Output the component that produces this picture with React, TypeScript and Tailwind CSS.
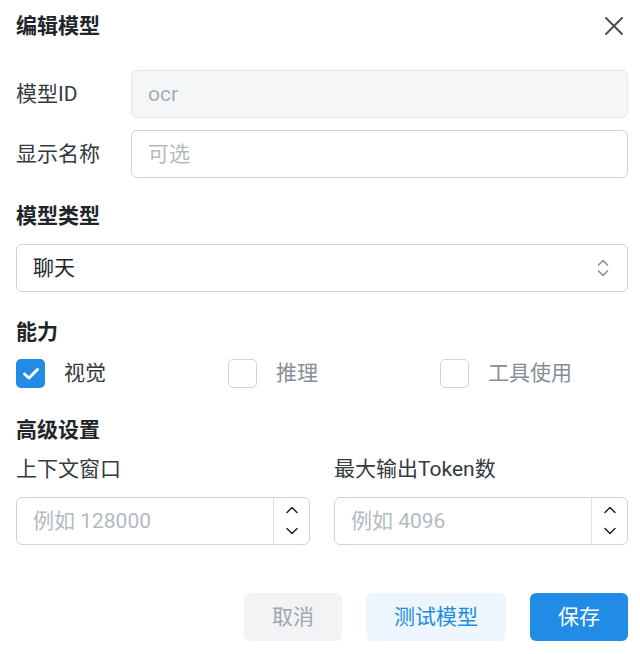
import React from "react";

const font = { fontFamily: "Roboto, 'Noto Sans CJK SC', sans-serif" };

function Chevron({ dir, className }: { dir: "up" | "down"; className?: string }) {
  return (
    <svg width="14" height="8" viewBox="0 0 14 8" className={className} fill="none" stroke="currentColor" strokeWidth="1.5" strokeLinecap="round" strokeLinejoin="round">
      {dir === "up" ? <path d="M2 6.5 L7 1.5 L12 6.5" /> : <path d="M2 1.5 L7 6.5 L12 1.5" />}
    </svg>
  );
}

function NumberInput({ placeholder }: { placeholder: string }) {
  return (
    <div className="flex h-[48px] rounded-[6px] border border-[#ced4da] bg-white">
      <div className="flex flex-1 items-center pl-4 pt-[2px] text-[21px] text-[#b4bac1]">{placeholder}</div>
      <div className="flex w-[36px] flex-col items-center justify-center gap-[13px] border-l border-[#dee2e6] text-[#212529]">
        <Chevron dir="up" />
        <Chevron dir="down" />
      </div>
    </div>
  );
}

function Check({ checked, label }: { checked?: boolean; label: string }) {
  return (
    <div className="flex items-center gap-[19px]">
      {checked ? (
        <div className="flex h-[29px] w-[29px] items-center justify-center rounded-[5px] bg-[#228be6]">
          <svg width="18" height="14" viewBox="0 0 18 14" fill="none" stroke="white" strokeWidth="3" strokeLinecap="round" strokeLinejoin="round">
            <path d="M2.5 7 L7 11 L15.5 2.5" />
          </svg>
        </div>
      ) : (
        <div className="h-[29px] w-[29px] rounded-[5px] border border-[#ced4da] bg-white" />
      )}
      <span className={`text-[21px] ${checked ? "text-[#343a40]" : "text-[#868e96]"}`}>{label}</span>
    </div>
  );
}

export default function App() {
  return (
    <div className="w-[640px] h-[654px] bg-white pl-4 pr-3 pt-3" style={font}>
      <div className="flex h-[28px] items-center justify-between">
        <h1 className="text-[21px] font-bold leading-[28px] text-[#212529]">编辑模型</h1>
        <svg width="22" height="22" viewBox="0 0 22 22" fill="none" stroke="#495057" strokeWidth="2" strokeLinecap="round" className="mr-[3px]">
          <path d="M3 3 L19 19 M19 3 L3 19" />
        </svg>
      </div>

      <div className="mt-[30px] flex flex-col gap-3">
        <div className="flex items-center">
          <label className="w-[115px] pt-[2px] text-[21px] text-[#343a40]">模型ID</label>
          <div className="flex h-[48px] flex-1 items-center rounded-[6px] border border-[#e3e6ea] bg-[#f5f6f8] pl-4 pt-[2px] text-[21px] text-[#a6adb5]">ocr</div>
        </div>
        <div className="flex items-center">
          <label className="w-[115px] pt-[2px] text-[21px] text-[#343a40]">显示名称</label>
          <div className="flex h-[48px] flex-1 items-center rounded-[6px] border border-[#ced4da] bg-white pl-4 pt-[2px] text-[21px] text-[#b4bac1]">可选</div>
        </div>
      </div>

      <h2 className="mt-[24px] text-[21px] font-bold leading-[28px] text-[#212529]">模型类型</h2>
      <div className="mt-[14px] flex h-[48px] items-center justify-between rounded-[6px] border border-[#ced4da] bg-white pl-4 pr-[18px]">
        <span className="pt-[2px] text-[21px] text-[#212529]">聊天</span>
        <div className="flex flex-col items-center gap-[4px] text-[#868e96]">
          <svg width="12" height="7" viewBox="0 0 12 7" fill="none" stroke="currentColor" strokeWidth="1.5" strokeLinecap="round" strokeLinejoin="round"><path d="M1.5 6 L6 1.5 L10.5 6" /></svg>
          <svg width="12" height="7" viewBox="0 0 12 7" fill="none" stroke="currentColor" strokeWidth="1.5" strokeLinecap="round" strokeLinejoin="round"><path d="M1.5 1 L6 5.5 L10.5 1" /></svg>
        </div>
      </div>

      <h2 className="mt-[26px] text-[21px] font-bold leading-[28px] text-[#212529]">能力</h2>
      <div className="mt-[12px] grid grid-cols-[212px_212px_1fr]">
        <Check checked label="视觉" />
        <Check label="推理" />
        <Check label="工具使用" />
      </div>

      <h2 className="mt-[26px] text-[21px] font-bold leading-[28px] text-[#212529]">高级设置</h2>
      <div className="mt-[11px] grid grid-cols-2 gap-x-6">
        <div>
          <div className="text-[21px] leading-[28px] text-[#343a40]">上下文窗口</div>
          <div className="mt-[14px]"><NumberInput placeholder="例如 128000" /></div>
        </div>
        <div>
          <div className="text-[21px] leading-[28px] text-[#343a40]">最大输出Token数</div>
          <div className="mt-[14px]"><NumberInput placeholder="例如 4096" /></div>
        </div>
      </div>

      <div className="mt-[48px] flex justify-end gap-6">
        <button className="h-[48px] w-[98px] rounded-[6px] bg-[#f1f3f5] pt-[2px] text-[21px] text-[#a0a7ae]">取消</button>
        <button className="h-[48px] w-[140px] rounded-[6px] bg-[#edf5fe] pt-[2px] text-[21px] text-[#228be6]">测试模型</button>
        <button className="h-[48px] w-[98px] rounded-[6px] bg-[#228be6] pt-[2px] text-[21px] text-white">保存</button>
      </div>
    </div>
  );
}
